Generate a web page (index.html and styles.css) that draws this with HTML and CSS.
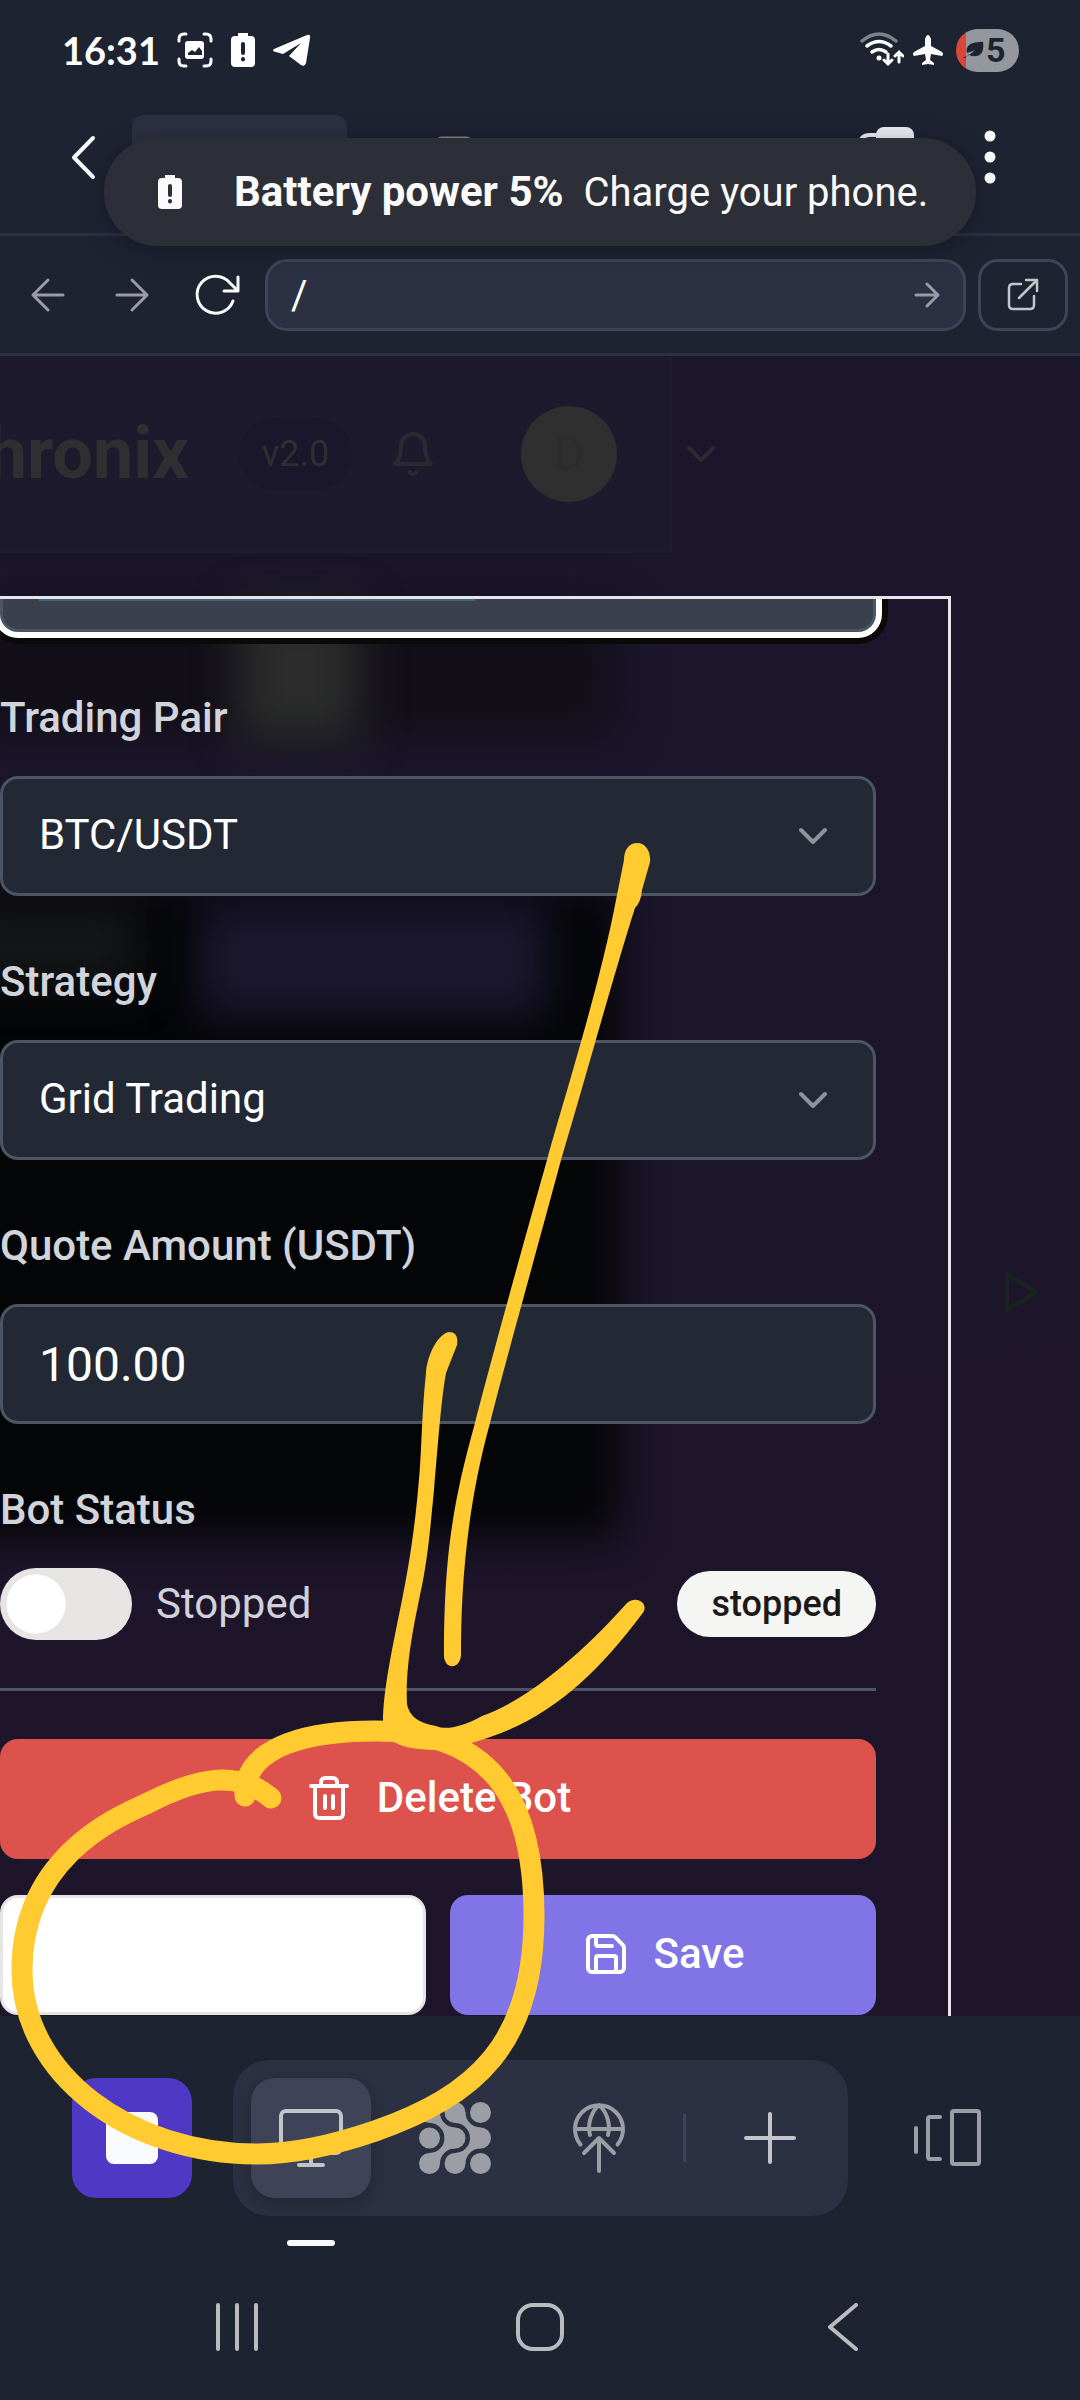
FILE: index.html
```html
<!DOCTYPE html>
<html lang="en">
<head>
<meta charset="utf-8">
<meta name="viewport" content="width=device-width, initial-scale=1">
<title>Chronix</title>
<link rel="stylesheet" href="styles.css">
</head>
<body>
<div class="screen">
  <div class="status-bar">
    <span class="clock">16:31</span>
    <svg class="ico-capture" viewBox="0 0 36 36" fill="none" stroke="#fff" stroke-width="3" stroke-linecap="round"><path d="M2 9V7q0-5 5-5h2M27 2h2q5 0 5 5v2M34 27v2q0 5-5 5h-2M9 34H7q-5 0-5-5v-2"/><rect x="8" y="9" width="19" height="18" rx="3" fill="#fff" stroke="none"/><path d="M11 23v-2l4-3 3 2 4-5 3 4v4z" fill="#1e2332" stroke="none"/></svg>
    <svg class="ico-cell" viewBox="0 0 24 34"><path d="M7 0h10v3h3q4 0 4 4v23q0 4-4 4H4q-4 0-4-4V7q0-4 4-4h3z" fill="#fff"/><path d="M12 11v9M12 26v.5" stroke="#1e2332" stroke-width="4" stroke-linecap="round"/></svg>
    <svg class="ico-plane" viewBox="0 0 38 32"><path d="M1 15 34 1q4-1 3 3l-4 25q-1 4-5 2l-12-9 12-13L10 20 1 17.500q-2-1 0-2.500z" fill="#fff"/></svg>
    <div class="status-right">
      <svg class="ico-wifi" viewBox="0 0 44 36" fill="none" stroke="#fff" stroke-width="3.500" stroke-linecap="round"><path d="M2 9q17-14 34 0" stroke="#7f828b"/><path d="M7 14q12-9 24 0M12 20q7-5 14 0"/><circle cx="19" cy="26" r="2.500" fill="#fff" stroke="none"/><path d="M28 22v10m-4-4 4 4 4-4M39 30V20m-4 4 4-4 4 4" stroke-width="3"/></svg>
      <svg class="ico-flight" viewBox="0 0 30 30"><path d="M12 4q3-8 6 0v7l11 6q2 2 0 4l-11-2-1 6 4 3v2l-6-1-6 1v-2l4-3-1-6-11 2q-2-2 0-4l11-6z" fill="#fff"/></svg>
      <div class="battery"><svg viewBox="0 0 24 22"><path d="M4 14Q2 2 22 2q2 16-10 16-4 0-6-2l-4 4-2-1q8-2 13-8-6 3-9 3z" fill="#1e2332"/></svg><span>5</span></div>
    </div>
  </div>

  <div class="app-bar">
    <button class="bare" aria-label="Back"><svg width="48" height="48" viewBox="0 0 48 48" fill="none" stroke="#f8fafc" stroke-width="4" stroke-linecap="round" stroke-linejoin="round"><path d="M33 5 14 24.500 33 44"/></svg></button>
    <div class="tab"></div>
    <svg class="app-icon" width="36" height="42" viewBox="0 0 36 42" fill="none" stroke="#7f828b" stroke-width="3"><rect x="1.500" y="2" width="33" height="38" rx="4"/></svg>
    <svg class="tabs-icon" width="60" height="60" viewBox="0 0 60 60"><path d="M4 50V18Q4 8 14 8h20" fill="none" stroke="#e9ebf2" stroke-width="4"/><rect x="20" y="0" width="38" height="32" rx="8" fill="#e9ebf2"/></svg>
    <button class="bare" aria-label="More"><svg width="48" height="54" viewBox="0 0 48 54" fill="#f8fafc"><circle cx="24" cy="6" r="5.500"/><circle cx="24" cy="27" r="5.500"/><circle cx="24" cy="48" r="5.500"/></svg></button>
  </div>

  <div class="url-bar">
    <div class="history">
      <button class="bare" aria-label="Go back"><svg width="36" height="36" viewBox="0 0 36 36" class="dim"><path d="M33 18H3M18 3 3 18l15 15"/></svg></button>
      <button class="bare" aria-label="Go forward"><svg width="36" height="36" viewBox="0 0 36 36" class="dim"><path d="M3 18h30M18 3l15 15-15 15"/></svg></button>
      <button class="bare" aria-label="Reload"><svg width="48" height="48" viewBox="0 0 48 48" fill="none" stroke="#f8fafc" stroke-width="3" stroke-linecap="round" stroke-linejoin="round"><path d="M41 30A18.500 18.500 0 1 1 38 12l7 7M46 6v14H32"/></svg></button>
    </div>
    <div class="address"><input type="text" value="/" aria-label="Path"><button class="bare" aria-label="Go"><svg width="28" height="28" viewBox="0 0 28 28" class="dim"><path d="M3 14h22M14 3l11 11-11 11"/></svg></button></div>
    <button class="external" aria-label="Open in new tab"><svg width="34" height="34" viewBox="0 0 34 34" fill="none" stroke="#c3c5c9" stroke-width="2.500" stroke-linecap="round" stroke-linejoin="round"><path d="M15 6H7q-4 0-4 4v17q0 4 4 4h17q4 0 4-4v-9M13 20 31 2M20 2h11v11"/></svg></button>
  </div>

  <main class="preview">
    <div class="haze haze-top"></div>
    <div class="haze haze-main"></div>
    <div class="haze haze-grey"></div>
    <div class="haze haze-violet"></div>
    <div class="haze haze-left"></div>
    <header class="site-header">
      <div class="brand"><span>Chronix</span></div>
      <span class="version">v2.0</span>
      <svg class="bell" viewBox="0 0 24 24" fill="none" stroke="#2b2a30" stroke-width="2" stroke-linecap="round" stroke-linejoin="round"><path d="M6 8a6 6 0 0 1 12 0c0 7 3 9 3 9H3s3-2 3-9M10.300 21a1.940 1.940 0 0 0 3.400 0"/></svg>
      <span class="avatar">D</span>
      <svg class="caret" viewBox="0 0 24 24" fill="none" stroke="#2b2a30" stroke-width="2" stroke-linecap="round" stroke-linejoin="round"><path d="m6 9 6 6 6-6"/></svg>
    </header>
    <form class="dialog">
      <div class="name-clip"><input class="name" type="text" aria-label="Bot name"></div>
      <div class="field">
        <label for="pair">Trading Pair</label>
        <div class="select"><select id="pair"><option>BTC/USDT</option></select><svg viewBox="0 0 24 24"><path d="m6 9 6 6 6-6"/></svg></div>
      </div>
      <div class="field">
        <label for="strategy">Strategy</label>
        <div class="select"><select id="strategy"><option>Grid Trading</option></select><svg viewBox="0 0 24 24"><path d="m6 9 6 6 6-6"/></svg></div>
      </div>
      <div class="field">
        <label for="amount">Quote Amount (USDT)</label>
        <input id="amount" class="amount" type="text" value="100.00">
      </div>
      <div class="field">
        <label for="running">Bot Status</label>
        <div class="status-row"><input id="running" class="switch" type="checkbox"><span>Stopped</span><span class="badge">stopped</span></div>
      </div>
      <hr>
      <div class="actions">
        <button type="button" class="btn delete"><svg viewBox="0 0 24 24"><path d="M3 6h18M19 6v14a2 2 0 0 1-2 2H7a2 2 0 0 1-2-2V6M8 6V4a2 2 0 0 1 2-2h4a2 2 0 0 1 2 2v2M10 11v6M14 11v6"/></svg>Delete Bot</button>
        <button type="button" class="btn cancel" aria-label="Cancel"></button>
        <button type="button" class="btn save"><svg viewBox="0 0 24 24"><path d="M15.200 3a2 2 0 0 1 1.400.6l3.800 3.800a2 2 0 0 1 .6 1.400V19a2 2 0 0 1-2 2H5a2 2 0 0 1-2-2V5a2 2 0 0 1 2-2zM17 21v-7a1 1 0 0 0-1-1H8a1 1 0 0 0-1 1v7M7 3v4a1 1 0 0 0 1 1h7"/></svg>Save</button>
      </div>
    </form>
    <svg class="play" viewBox="0 0 36 42" fill="none" stroke="#18251f" stroke-width="4" stroke-linejoin="round"><path d="M3 3v36l29-18z"/></svg>
  </main>

  <div class="dock">
    <button class="tile stop" aria-label="Stop"><span></span></button>
    <div class="group">
      <button class="tile active" aria-label="Preview"><svg width="72" height="72" viewBox="0 0 72 72"><rect x="6" y="9" width="60" height="42" rx="5"/><path d="M36 51v12M24 63h24"/></svg></button>
      <button class="tile" aria-label="Agent"><svg width="72" height="72" viewBox="0 0 72 72" class="dots"><circle cx="10.500" cy="10.500" r="10.500"/><circle cx="36" cy="10.500" r="10.500"/><circle cx="61.500" cy="10.500" r="10.500"/><circle cx="10.500" cy="36" r="10.500"/><circle cx="36" cy="36" r="10.500"/><circle cx="61.500" cy="36" r="10.500"/><circle cx="10.500" cy="61.500" r="10.500"/><circle cx="36" cy="61.500" r="10.500"/><circle cx="61.500" cy="61.500" r="10.500"/><path id="neck" d="M10.500 10.500h10.500a15 15 0 0 0 15 15v10.500h-10.500a15 15 0 0 0-15-15z"/><use href="#neck" x="25.500"/><g transform="matrix(1 0 0 -1 0 72)"><use href="#neck"/><use href="#neck" x="25.500"/></g></svg></button>
      <button class="tile" aria-label="Publish"><svg width="72" height="72" viewBox="0 0 72 72" class="globe"><path d="M17.500 42.500a24 24 0 1 1 37 0M12 27h48M27 33c-3-12 2-24 9-30M45 33c3-12-2-24-9-30M36 69V37M21 51l15-15 15 15"/></svg></button>
      <span class="rule"></span>
      <button class="tile" aria-label="New tab"><svg width="72" height="72" viewBox="0 0 72 72"><path d="M36 12v48M12 36h48"/></svg></button>
    </div>
    <button class="tile" aria-label="Switch panel"><svg width="72" height="72" viewBox="0 0 72 72" class="globe"><path d="M4 26v24M28 15H18q-2 0-2 2v38q0 2 2 2h10"/><rect x="40" y="9" width="27" height="53" rx="2"/></svg></button>
  </div>

  <nav class="system-nav">
    <button class="bare" aria-label="Recents"><svg width="48" height="48" viewBox="0 0 48 48"><path d="M5 2v44M24 2v44M43 2v44"/></svg></button>
    <button class="bare" aria-label="Home"><svg width="48" height="48" viewBox="0 0 48 48"><rect x="2" y="2" width="44" height="44" rx="15"/></svg></button>
    <button class="bare" aria-label="Back"><svg width="48" height="48" viewBox="0 0 48 48"><path d="M37 2 11 24l26 22"/></svg></button>
  </nav>

  <div class="toast" role="status">
    <svg class="ico-cell" viewBox="0 0 24 34"><path d="M7 0h10v3h3q4 0 4 4v23q0 4-4 4H4q-4 0-4-4V7q0-4 4-4h3z" fill="#fafafa"/><path d="M12 11v9M12 26v.5" stroke="#2d2f38" stroke-width="4" stroke-linecap="round"/></svg>
    <p><strong>Battery power 5%</strong><span>Charge your phone.</span></p>
  </div>

  <svg class="ink" viewBox="0 0 1080 2400" aria-hidden="true">
    <path class="fill" d="M637 843C629 843 624 850 624 860L616 900C600 985 565 1095 547 1160C520 1255 490 1365 475 1423C452 1505 444 1560 444 1655C444 1670 460 1670 461 1655C461 1590 466 1510 490 1423C506 1360 530 1275 561 1160C585 1080 615 970 635 908Q641 902 642 890L650 862C651 852 646 843 637 843Z"/>
    <path class="fill" d="M449 1332C438 1334 427 1355 426 1373C421 1420 422 1455 418 1490C414 1535 408 1570 402 1600C393 1645 383 1690 383 1722L394 1742C404 1748 420 1750 439 1750C530 1735 585 1690 642 1614C650 1605 638 1594 627 1603C590 1645 530 1700 482 1716C460 1728 445 1730 436 1726Q410 1722 407 1704C405 1665 415 1620 420 1595C428 1560 431 1520 434 1490C438 1445 441 1400 446 1373L457 1345Q459 1332 449 1332Z"/>
    <path class="line" d="M245 1796V1787C252 1745 310 1731 375 1731C500 1731 534 1810 534 1916C534 2045 475 2096 375 2131C340 2143 300 2154 257 2154C130 2154 22 2075 22 1970C22 1850 130 1812 150 1802C200 1777 238 1770 271 1798"/>
  </svg>
</div>
</body>
</html>
```
FILE: styles.css
```css
* { box-sizing: border-box; }
body { margin: 0; background: #1e2332; font-family: Roboto, "Liberation Sans", sans-serif; color: #fff; }
button, input, select { font: inherit; color: inherit; margin: 0; }
svg { display: block; flex: none; }
.screen { position: relative; display: flex; flex-direction: column; min-height: 100vh; overflow: hidden; background: #1e2332; }
.bare { display: flex; justify-content: center; align-items: center; padding: 0; border: 0; background: none; }
.dim { fill: none; stroke: #999ca3; stroke-width: 3; stroke-linecap: round; stroke-linejoin: round; }

.status-bar { display: flex; align-items: center; gap: 18px; height: 80px; padding: 20px 61px 0 62px; }
.clock { width: 97px; font: 700 38px/48px Lato, sans-serif; }
.ico-capture { width: 36px; height: 36px; }
.ico-cell { width: 24px; height: 34px; }
.ico-plane { width: 38px; height: 32px; }
.status-right { display: flex; align-items: center; gap: 9px; margin-left: auto; }
.ico-wifi { width: 44px; height: 36px; }
.ico-flight { width: 30px; height: 30px; }
.battery { display: flex; align-items: center; gap: 1px; width: 63px; height: 43px; padding-left: 7px; border-radius: 22px; margin-left: 4px; background: linear-gradient(90deg, #dc4638 10px, #94979e 10px); color: #1e2332; font-size: 34px; font-weight: 700; line-height: 43px; }
.battery svg { width: 22px; height: 20px; }

.app-bar { display: flex; align-items: center; height: 156px; padding: 0 66px 0 60px; border-bottom: 3px solid #2b3042; }
.tab { width: 215px; height: 84px; margin-left: 24px; border-radius: 12px; background: #2b3042; }
.app-icon { margin-left: 89px; }
.tabs-icon { margin: 0 50px 0 auto; }

.url-bar { display: flex; align-items: center; gap: 12px; padding: 23px 12px 22px 6px; border-bottom: 3px solid #2b3042; }
.history { display: grid; grid-template-columns: repeat(3, 84px); margin-right: -5px; }
.address { display: flex; flex: 1; align-items: center; height: 72px; padding: 0 22px 0 23px; border: 3px solid #3e4358; border-radius: 22px; background: #2b3042; }
.address input { flex: 1; min-width: 0; padding: 0; border: 0; background: none; font-size: 40px; outline: 0; }
.external { display: flex; justify-content: center; align-items: center; width: 90px; height: 72px; border: 3px solid #3e4358; border-radius: 20px; background: none; }

.preview { position: relative; display: flex; flex: 1; flex-direction: column; overflow: hidden; background: linear-gradient(170deg, #1b162b 0%, #1b162b 25%, #1d152a 45%, #1e152a 100%); }
.haze { position: absolute; filter: blur(22px); }
.haze-top { left: -40px; top: 250px; width: 655px; height: 130px; background: #120f18; }
.haze-main { left: -40px; top: 530px; width: 660px; height: 652px; background: #040507; }
.haze-grey { left: 238px; top: 250px; width: 122px; height: 134px; background: #2b2c2b; }
.haze-violet { left: 198px; top: 545px; width: 350px; height: 118px; background: #1b172e; }
.haze-left { left: -40px; top: 550px; width: 180px; height: 80px; background: #151617; }
.site-header { position: relative; display: flex; align-items: center; width: 672px; height: 197px; background: #1d1a2d; border: solid #201c2e; border-width: 0 2px 2px 0; }
.site-header > * { flex: none; }
.brand { display: flex; justify-content: flex-end; width: 189px; color: #2f2f31; font-size: 72px; font-weight: 700; line-height: 84px; }
.version { width: 113px; height: 72px; margin-left: 50px; border-radius: 36px; background: #1a162c; color: #2f2f31; font-size: 36px; line-height: 72px; text-align: center; }
.bell { width: 48px; height: 48px; margin-left: 37px; }
.avatar { width: 96px; height: 96px; margin-left: 84px; border-radius: 50%; background: #2f2f2f; color: #2c2c2e; font-size: 48px; line-height: 96px; text-align: center; }
.caret { width: 48px; height: 48px; margin-left: 60px; }
.play { position: absolute; left: calc(100% - 76px); top: 915px; width: 36px; height: 42px; }

.dialog { position: relative; flex: 1; margin: 43px 129px 0 0; padding: 0 72px 1px 0; border: solid #e7e5e8; border-width: 3px 3px 0 0; }
.name-clip { clip-path: inset(0 -12px -12px 0); }
.name { display: block; width: 100%; height: 33px; padding: 0 36px; border: 3px solid #4b5563; border-top: 0; border-radius: 0 0 18px 18px; outline: 0; background: linear-gradient(#3f657c, #3f657c) 36px 0 / 436px 2px no-repeat #3a404e; box-shadow: 0 0 0 6px #fff, 0 0 0 12px #0a0a09; }
.field { display: flex; flex-direction: column; gap: 28px; margin-top: 56px; }
label { color: #d1d5db; font-size: 42px; font-weight: 500; line-height: 60px; }
.select { display: grid; align-items: center; }
.select > * { grid-area: 1 / 1; }
.select svg { justify-self: end; width: 48px; height: 48px; margin-right: 39px; fill: none; stroke: #8f9399; stroke-width: 2; stroke-linecap: round; stroke-linejoin: round; pointer-events: none; }
select, .amount { appearance: none; width: 100%; height: 120px; padding: 0 36px; border: 3px solid #4b5563; border-radius: 18px; outline: 0; background: #222935; font-size: 42px; }
select { padding-bottom: 3px; }
.amount { font-size: 48px; }
.status-row { display: flex; align-items: center; gap: 24px; height: 72px; color: #d1d1db; font-size: 42px; line-height: 48px; }
.switch { appearance: none; width: 132px; height: 72px; border-radius: 36px; background: radial-gradient(circle at 36px 36px, #fff 29px, #e7e5e4 30px); }
.badge { margin-left: auto; padding: 9px 34px; border-radius: 33px; background: #f5f5f4; color: #1c1917; font-size: 36px; font-weight: 500; }
hr { height: 3px; margin: 48px 0; border: 0; background: #4b5563; }
.actions { display: grid; grid-template-columns: 1fr 1fr; gap: 36px 24px; }
.btn { display: flex; justify-content: center; align-items: center; gap: 24px; height: 120px; padding: 0 0 3px; border: 0; border-radius: 18px; font-size: 42px; font-weight: 500; }
.btn svg { width: 48px; height: 48px; fill: none; stroke: currentColor; stroke-width: 2; stroke-linecap: round; stroke-linejoin: round; }
.delete { grid-column: 1 / -1; background: #dd524c; }
.cancel { border: 3px solid #e7e5e4; background: #fff; }
.save { background: #8174e6; }

.dock { display: flex; justify-content: space-between; align-items: center; padding: 44px 72px 38px; }
.group { display: flex; align-items: center; gap: 24px; padding: 18px; border-radius: 36px; background: #2b3042; }
.tile { position: relative; display: flex; justify-content: center; align-items: center; width: 120px; height: 120px; padding: 0; border: 0; border-radius: 24px; background: none; }
.tile svg { fill: none; stroke: #c3c5c9; stroke-width: 4; stroke-linecap: round; stroke-linejoin: round; }
.tile .globe { stroke: #9b9ea4; }
.tile .dots { fill: #9b9ea4; stroke: none; }
.stop { background: #4f39c4; }
.stop span { width: 52px; height: 52px; border-radius: 8px; background: #f8fafc; }
.active { background: #3e4358; box-shadow: 0 6px 18px #0003; }
.active::after { content: ""; position: absolute; left: 36px; bottom: -48px; width: 48px; height: 6px; border-radius: 3px; background: #f8fafc; }
.rule { width: 3px; height: 48px; background: #3e4358; }

.system-nav { display: grid; grid-template-columns: repeat(3, 1fr); align-items: center; height: 146px; padding: 0 86px; }
.system-nav svg { fill: none; stroke: #b9bbbf; stroke-width: 4; stroke-linecap: round; stroke-linejoin: round; }

.toast { position: absolute; left: 104px; right: 104px; top: 138px; display: flex; align-items: center; height: 108px; padding: 0 50px 0 54px; border-radius: 54px; background: #2d2f38; box-shadow: 0 4px 24px #0004; color: #fafafa; font-size: 40px; line-height: 48px; white-space: nowrap; }
.toast p { margin: 0 0 0 52px; }
.toast strong { margin-right: 20px; font-size: 42px; font-weight: 700; }
.ink { position: absolute; left: 0; top: 0; width: 100%; pointer-events: none; }
.ink .fill { fill: #ffcb31; }
.ink .line { fill: none; stroke: #ffcb31; stroke-width: 21; stroke-linecap: round; stroke-linejoin: round; }
```
